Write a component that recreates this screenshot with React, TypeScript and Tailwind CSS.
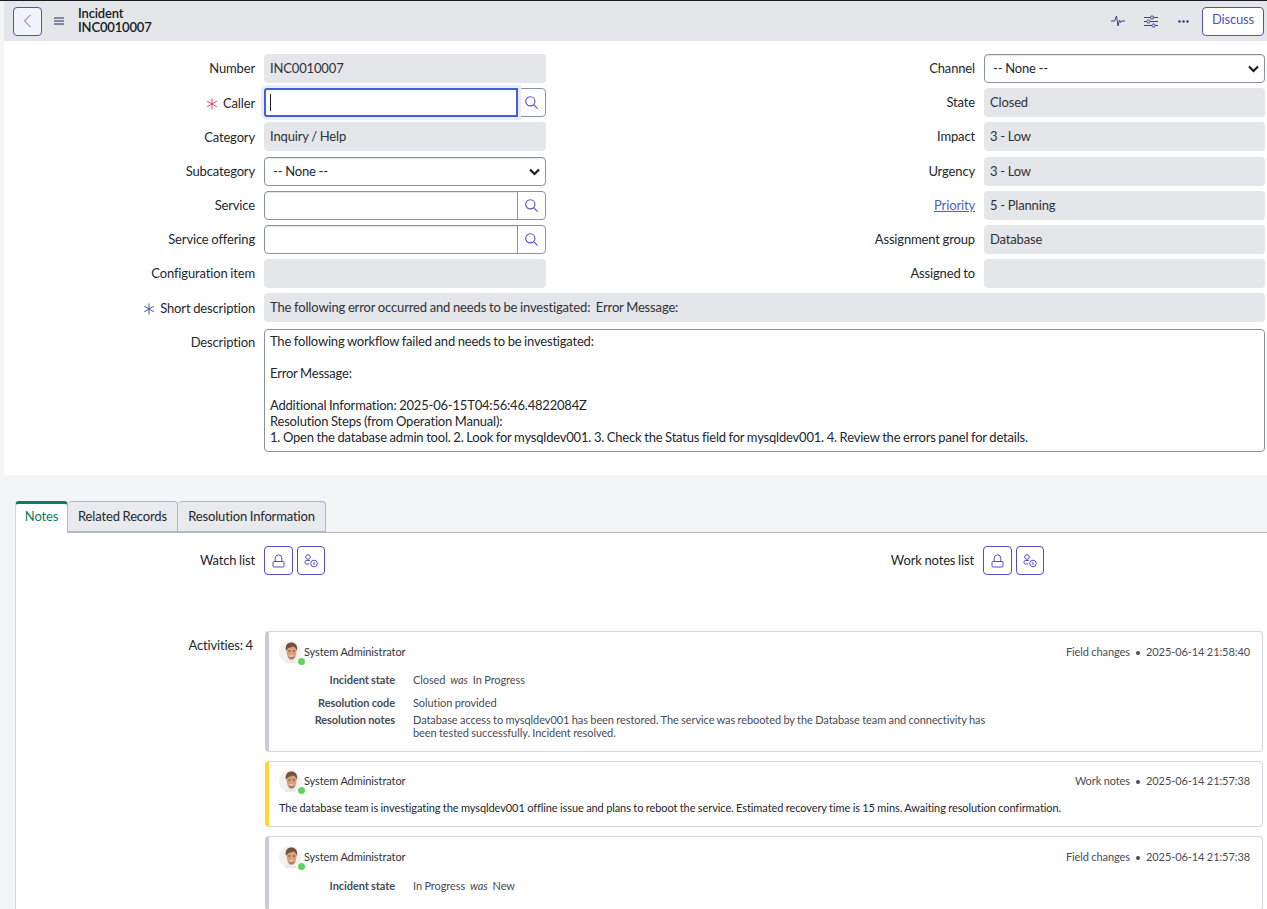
import type { ReactNode } from 'react';

const purple = '#4f52bd';

function SearchBtn() {
  return (
    <button className="w-[29px] h-[29px] shrink-0 bg-white border border-[#8d919c] rounded-r-[4px] flex items-center justify-center -ml-px">
      <svg width="15" height="15" viewBox="0 0 15 15" fill="none" stroke={purple} strokeWidth="1.1">
        <circle cx="6.3" cy="6.3" r="4.6" />
        <path d="M9.7 9.7 13.6 13.6" />
      </svg>
    </button>
  );
}

function ReadOnly({ children }: { children?: ReactNode }) {
  return <div className="h-[29px] w-full bg-[#e4e6e9] rounded-[4px] px-[6px] flex items-center text-[#2e3238] whitespace-pre">{children}</div>;
}

function Lookup({ focused }: { focused?: boolean }) {
  return (
    <div className="flex w-full h-[29px]">
      {focused ? (
        <div className="flex-1 bg-white border-2 border-[#3f5ee0] rounded-l-[3px] shadow-[0_0_0_3px_#e9ecfb] flex items-center pl-[4px] z-10">
          <div className="w-px h-[17px] bg-[#1b1f24]" />
        </div>
      ) : (
        <div className="flex-1 bg-white border border-[#8d919c] rounded-l-[4px] shadow-[inset_0_1px_1px_#e4e6e9]" />
      )}
      <SearchBtn />
    </div>
  );
}

function Select() {
  return (
    <div className="w-full h-[29px] bg-white border border-[#8d919c] rounded-[4px] flex items-center justify-between pl-[8px] pr-[5px] shadow-[inset_0_1px_1px_#e4e6e9]">
      <span>-- None --</span>
      <svg width="11" height="8" viewBox="0 0 11 8" fill="none" stroke="#1b1f24" strokeWidth="2.2">
        <path d="M1 1.5 5.5 6 10 1.5" />
      </svg>
    </div>
  );
}

function Star({ color }: { color: string }) {
  return (
    <svg width="12" height="12" viewBox="0 0 12 12" fill="none" stroke={color} strokeWidth="1" className="mr-[5px]">
      <path d="M6 .5v11M1.2 3.2l9.6 5.6M10.8 3.2 1.2 8.8" />
    </svg>
  );
}

function Label({ children, star, link, low }: { children: ReactNode; star?: string; link?: boolean; low?: boolean }) {
  return (
    <div className={`flex items-center justify-end h-[29px] ${low ? 'pt-[2px]' : ''} ${link ? 'text-[#4b5fc0] underline' : 'text-[#23272d]'}`}>
      {star && <Star color={star} />}
      {children}
    </div>
  );
}

function Row({ left, right, className }: { left: [ReactNode, ReactNode]; right: [ReactNode, ReactNode]; className?: string }) {
  return (
    <div className={`flex h-[29px] ${className ?? ''}`}>
      <div className="w-[251px] shrink-0">{left[0]}</div>
      <div className="w-[282px] shrink-0 ml-[9px]">{left[1]}</div>
      <div className="w-[429px] shrink-0">{right[0]}</div>
      <div className="w-[281px] shrink-0 ml-[9px]">{right[1]}</div>
    </div>
  );
}

function IconBtn({ children, size = 'w-[29px]' }: { children: ReactNode; size?: string }) {
  return (
    <button className={`${size} h-[29px] bg-white border border-[#4f52bd] rounded-[4px] flex items-center justify-center`}>
      {children}
    </button>
  );
}

function LockIcon() {
  return (
    <svg width="13" height="14" viewBox="0 0 13 14" fill="none" stroke={purple} strokeWidth="1">
      <rect x="1" y="7.5" width="11" height="5.5" rx="1" />
      <path d="M3.2 7.5V4.2a3.3 3.3 0 0 1 6.6 0v3.3" />
    </svg>
  );
}

function PeopleIcon() {
  return (
    <svg width="14" height="14" viewBox="0 0 14 14" fill="none" stroke={purple} strokeWidth="1">
      <circle cx="4" cy="3" r="2.300" />
      <path d="M5.800 6.500H2.500A1.500 1.500 0 0 0 1 8v.800c0 .700.500 1.200 1.200 1.200h3" />
      <circle cx="10" cy="9.500" r="3.300" />
      <path d="M10 8v3" />
    </svg>
  );
}

function Avatar() {
  return (
    <div className="relative w-[23px] h-[23px] shrink-0">
      <svg width="23" height="23" viewBox="0 0 23 23">
        <circle cx="11" cy="11" r="11" fill="#f3f1ee" />
        <path d="M6 22c1-3 3-4 6-4s5 1 6 4z" fill="#ece9e5" />
        <path d="M7.500 8c0 6 1.500 11 5 11s5-5 5-10-3-5-5-5-5 1-5 4z" fill="#d8a07e" />
        <path d="M7 10C5.500 4 9 1.500 12.500 1.500S19 4 18 10.500c-.5-3-2-4.500-4-5-2.500 1-5.500 1-7 4.500z" fill="#6f5340" />
        <path d="M9 15.500c1 3 6 3.500 7.500-.5-2 1.200-5.500 1.500-7.500.5z" fill="#a9745c" />
        <path d="M9.300 10h2.200M13.800 10H16" stroke="#5b4032" strokeWidth=".9" />
        <path d="M10.500 15h4" stroke="#f7ece4" strokeWidth=".8" />
      </svg>
      <span className="absolute right-[-3px] bottom-[-1px] w-[7px] h-[7px] rounded-full bg-[#5fd35f]" />
    </div>
  );
}

function ActivityCard({ bar, type, time, height, top, children }: { bar: string; type: string; time: string; height: string; top: string; children: ReactNode }) {
  return (
    <div className={`${bar} ${height} ${top} w-[998px] bg-white border border-[#d5d7dd] border-l-4 rounded-[4px] pl-[10px] pr-[12px] text-[#474c55] text-[11px] tracking-[-0.08px] [word-spacing:-0.3px] overflow-hidden`}>
      <div className="flex items-center h-[23px]">
        <Avatar />
        <span className="ml-[2px] text-[#2f343b]">System Administrator</span>
        <span className="ml-auto">{type}</span>
        <span className="mx-[6px] w-[4px] h-[4px] rounded-full bg-[#474c55]" />
        <span>{time}</span>
      </div>
      {children}
    </div>
  );
}

function Change({ label, className, children }: { label: string; className?: string; children: ReactNode }) {
  return (
    <div className={`flex leading-[13px] ${className ?? ''}`}>
      <div className="w-[116px] shrink-0 text-right font-bold text-[#474c55]">{label}</div>
      <div className="ml-[18px] w-[580px]">{children}</div>
    </div>
  );
}

function Was({ a, b }: { a: string; b: string }) {
  return (
    <span className="whitespace-pre">
      {a}  <em>was</em>  {b}
    </span>
  );
}

export default function App() {
  return (
    <div className="h-[909px] w-[1267px] overflow-hidden bg-[#f4f5f7] font-['Lato',sans-serif] text-[13px] tracking-[-0.15px] [word-spacing:-0.4px] text-[#23272d] border-t border-[#1a1c22]">
      {/* Header */}
      <div className="h-[40px] ml-[4px] pl-[9px] pr-[3px] bg-[#e4e6e9] flex items-center">
        <button className="w-[29px] h-[29px] bg-[#f3f3fb] border border-[#4f52bd] rounded-[4px] flex items-center justify-center">
          <svg width="9" height="14" viewBox="0 0 9 14" fill="none" stroke="#5f62c4" strokeWidth="1">
            <path d="M7.500 1 1.500 7l6 6" />
          </svg>
        </button>
        <svg className="ml-[12px]" width="10" height="8" viewBox="0 0 10 8" fill="none" stroke="#22245e" strokeWidth="1">
          <path d="M0 1h10M0 4h10M0 7h10" />
        </svg>
        <div className="ml-[14px] font-semibold leading-[14px] text-[#16191d] -mt-[2px]">
          <div>Incident</div>
          <div>INC0010007</div>
        </div>
        <div className="ml-auto flex items-center">
          <svg width="14" height="14" viewBox="0 0 14 14" fill="none" stroke="#3b3f86" strokeWidth="1">
            <path d="M0 7h3.500L5.500 2l1.500 10 1.500-6 1 2.500L10.500 7H14" />
          </svg>
          <svg className="ml-[19px]" width="14" height="13" viewBox="0 0 14 13" fill="none" stroke="#3b3f86" strokeWidth="1">
            <path d="M0 2.500h14M0 6.500h14M0 10.500h14" />
            <circle cx="8" cy="2.500" r="1.600" fill="#e4e6e9" />
            <circle cx="4.500" cy="6.500" r="1.600" fill="#e4e6e9" />
            <circle cx="9.500" cy="10.500" r="1.600" fill="#e4e6e9" />
          </svg>
          <svg className="ml-[20px]" width="11" height="3" viewBox="0 0 11 3" fill="#3b3f86">
            <circle cx="1.500" cy="1.500" r="1.300" />
            <circle cx="5.500" cy="1.500" r="1.300" />
            <circle cx="9.500" cy="1.500" r="1.300" />
          </svg>
          <button className="ml-[13px] w-[62px] h-[29px] bg-white border border-[#4f52bd] rounded-[4px] text-[#4f52bd] pb-[2px]">Discuss</button>
        </div>
      </div>

      {/* Form */}
      <div className="ml-[4px] bg-white h-[434px] pt-[13px] flex flex-col gap-[5px]">
        <Row left={[<Label>Number</Label>, <ReadOnly>INC0010007</ReadOnly>]} right={[<Label>Channel</Label>, <Select />]} />
        <Row left={[<Label low star="#d9446c">Caller</Label>, <Lookup focused />]} right={[<Label>State</Label>, <ReadOnly>Closed</ReadOnly>]} />
        <Row left={[<Label low>Category</Label>, <ReadOnly>Inquiry / Help</ReadOnly>]} right={[<Label>Impact</Label>, <ReadOnly>3 - Low</ReadOnly>]} />
        <Row className="mt-px" left={[<Label>Subcategory</Label>, <Select />]} right={[<Label>Urgency</Label>, <ReadOnly>3 - Low</ReadOnly>]} />
        <Row left={[<Label>Service</Label>, <Lookup />]} right={[<Label link>Priority</Label>, <ReadOnly>5 - Planning</ReadOnly>]} />
        <Row left={[<Label>Service offering</Label>, <Lookup />]} right={[<Label>Assignment group</Label>, <ReadOnly>Database</ReadOnly>]} />
        <Row left={[<Label>Configuration item</Label>, <ReadOnly />]} right={[<Label>Assigned to</Label>, <ReadOnly />]} />
        <div className="flex h-[29px]">
          <div className="w-[251px] shrink-0">
            <Label low star="#3f5a9e">Short description</Label>
          </div>
          <div className="w-[1001px] ml-[9px]">
            <ReadOnly>The following error occurred and needs to be investigated:  Error Message:</ReadOnly>
          </div>
        </div>
        <div className="flex mt-[2px]">
          <div className="w-[251px] shrink-0 -mt-px">
            <Label>Description</Label>
          </div>
          <div className="w-[1001px] h-[123px] ml-[9px] bg-white border border-[#8d919c] rounded-[4px] px-[5px] pt-[3px] leading-[16px] tracking-[-0.2px] whitespace-pre-line">
            {`The following workflow failed and needs to be investigated:

Error Message:

Additional Information: 2025-06-15T04:56:46.4822084Z
Resolution Steps (from Operation Manual):
1. Open the database admin tool. 2. Look for mysqldev001. 3. Check the Status field for mysqldev001. 4. Review the errors panel for details.`}
          </div>
        </div>
      </div>

      {/* Tabs */}
      <div className="ml-[15px] mt-[26px] flex h-[32px] border-b border-[#b4b8c2]">
        <div className="w-[53px] h-[32px] bg-white border-t-[3px] border-l border-l-[#d5d7dd] border-t-[#0b7d62] border-r border-r-[#b4b8c2] rounded-t-[4px] text-[#0b7d62] flex items-center justify-center pb-[3px]">Notes</div>
        <div className="w-[110px] h-[31px] bg-[#e8eaed] border border-[#b4b8c2] border-l-0 rounded-t-[4px] flex items-center justify-center">Related Records</div>
        <div className="w-[148px] h-[31px] bg-[#e8eaed] border border-[#b4b8c2] border-l-0 rounded-t-[4px] flex items-center justify-center">Resolution Information</div>
      </div>

      {/* Notes panel */}
      <div className="ml-[15px] h-[400px] bg-white border-l border-[#d5d7dd] pt-[13px]">
        <div className="flex items-center h-[29px]">
          <div className="w-[239px] text-right">Watch list</div>
          <div className="ml-[9px] flex gap-[4px] w-[61px]">
            <IconBtn><LockIcon /></IconBtn>
            <IconBtn size="w-[28px]"><PeopleIcon /></IconBtn>
          </div>
          <div className="w-[649px] text-right">Work notes list</div>
          <div className="ml-[9px] flex gap-[4px]">
            <IconBtn><LockIcon /></IconBtn>
            <IconBtn size="w-[28px]"><PeopleIcon /></IconBtn>
          </div>
        </div>
        <div className="flex mt-[56px]">
          <div className="w-[237px] text-right pt-[5px]">Activities: 4</div>
          <div className="ml-[12px] flex flex-col gap-[9px]">
            <ActivityCard bar="border-l-[#c9ccd6]" type="Field changes" time="2025-06-14 21:58:40" height="h-[121px]" top="pt-[9px]">
              <Change label="Incident state" className="mt-[9px]"><Was a="Closed" b="In Progress" /></Change>
              <Change label="Resolution code" className="mt-[10px]">Solution provided</Change>
              <Change label="Resolution notes" className="mt-[4px]">Database access to mysqldev001 has been restored. The service was rebooted by the Database team and connectivity has been tested successfully. Incident resolved.</Change>
            </ActivityCard>
            <ActivityCard bar="border-l-[#fdd835]" type="Work notes" time="2025-06-14 21:57:38" height="h-[66px]" top="pt-[8px]">
              <div className="mt-[7px] text-[#23272d]">The database team is investigating the mysqldev001 offline issue and plans to reboot the service. Estimated recovery time is 15 mins. Awaiting resolution confirmation.</div>
            </ActivityCard>
            <ActivityCard bar="border-l-[#c9ccd6]" type="Field changes" time="2025-06-14 21:57:38" height="h-[74px]" top="pt-[9px]">
              <Change label="Incident state" className="mt-[10px]"><Was a="In Progress" b="New" /></Change>
            </ActivityCard>
          </div>
        </div>
      </div>
    </div>
  );
}
